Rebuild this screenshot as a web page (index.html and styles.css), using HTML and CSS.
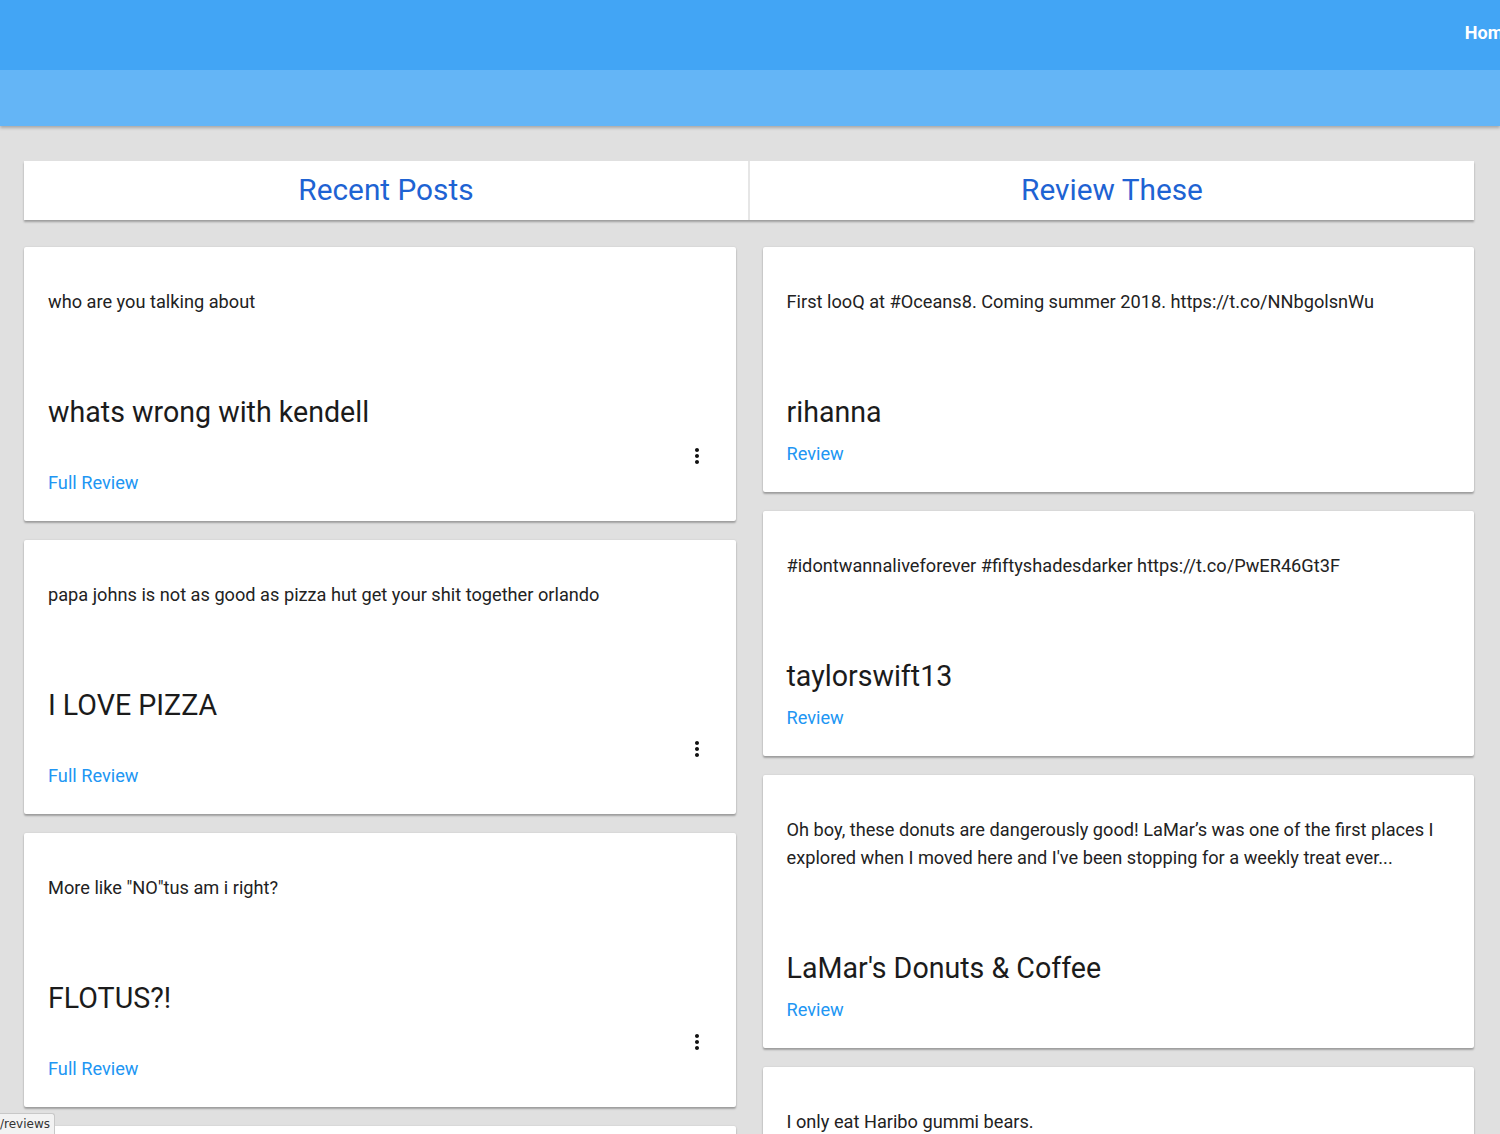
FILE: index.html
```html
<!DOCTYPE html>
<html>
<head>
<meta charset="utf-8">
<link rel="stylesheet" href="styles.css">
</head>
<body>
<header class="appbar">
  <div class="appbar-top">
    <nav class="nav"><a class="nav-link">Home</a></nav>
  </div>
  <div class="appbar-bottom"></div>
</header>
<main class="main">
  <div class="tabs">
    <div class="tab">Recent Posts</div>
    <div class="tab">Review These</div>
  </div>
  <div class="columns">
    <div class="column">
      <div class="card">
        <p class="card-text">who are you talking about</p>
        <h2 class="card-title">whats wrong with kendell</h2>
        <div class="card-more"><svg width="24" height="24" viewBox="0 0 24 24"><path d="M12 8c1.1 0 2-.9 2-2s-.9-2-2-2-2 .9-2 2 .9 2 2 2zm0 2c-1.1 0-2 .9-2 2s.9 2 2 2 2-.9 2-2-.9-2-2-2zm0 6c-1.1 0-2 .9-2 2s.9 2 2 2 2-.9 2-2-.9-2-2-2z" fill="#111"/></svg></div>
        <a class="card-link">Full Review</a>
      </div>
      <div class="card">
        <p class="card-text">papa johns is not as good as pizza hut get your shit together orlando</p>
        <h2 class="card-title">I LOVE PIZZA</h2>
        <div class="card-more"><svg width="24" height="24" viewBox="0 0 24 24"><path d="M12 8c1.1 0 2-.9 2-2s-.9-2-2-2-2 .9-2 2 .9 2 2 2zm0 2c-1.1 0-2 .9-2 2s.9 2 2 2 2-.9 2-2-.9-2-2-2zm0 6c-1.1 0-2 .9-2 2s.9 2 2 2 2-.9 2-2-.9-2-2-2z" fill="#111"/></svg></div>
        <a class="card-link">Full Review</a>
      </div>
      <div class="card">
        <p class="card-text">More like "NO"tus am i right?</p>
        <h2 class="card-title">FLOTUS?!</h2>
        <div class="card-more"><svg width="24" height="24" viewBox="0 0 24 24"><path d="M12 8c1.1 0 2-.9 2-2s-.9-2-2-2-2 .9-2 2 .9 2 2 2zm0 2c-1.1 0-2 .9-2 2s.9 2 2 2 2-.9 2-2-.9-2-2-2zm0 6c-1.1 0-2 .9-2 2s.9 2 2 2 2-.9 2-2-.9-2-2-2z" fill="#111"/></svg></div>
        <a class="card-link">Full Review</a>
      </div>
      <div class="card">
        <p class="card-text">&nbsp;</p>
      </div>
    </div>
    <div class="column">
      <div class="card">
        <p class="card-text">First looQ at #Oceans8. Coming summer 2018. https://t.co/NNbgolsnWu</p>
        <h2 class="card-title">rihanna</h2>
        <a class="card-link">Review</a>
      </div>
      <div class="card">
        <p class="card-text">#idontwannaliveforever #fiftyshadesdarker https://t.co/PwER46Gt3F</p>
        <h2 class="card-title">taylorswift13</h2>
        <a class="card-link">Review</a>
      </div>
      <div class="card">
        <p class="card-text">Oh boy, these donuts are dangerously good! LaMar’s was one of the first places I explored when I moved here and I've been stopping for a weekly treat ever...</p>
        <h2 class="card-title">LaMar's Donuts &amp; Coffee</h2>
        <a class="card-link">Review</a>
      </div>
      <div class="card">
        <p class="card-text">I only eat Haribo gummi bears.</p>
      </div>
    </div>
  </div>
</main>
<div class="status">/reviews</div>
</body>
</html>
```

FILE: styles.css
```css
html, body {
  margin: 0;
  padding: 0;
}
body {
  background: #e0e0e0;
  font-family: Roboto, "Liberation Sans", sans-serif;
  color: #212121;
  overflow: hidden;
  height: 1134px;
}
.appbar {
  box-shadow: 0 2px 3px rgba(0,0,0,0.25);
  overflow: hidden;
}
.appbar-top {
  height: 70px;
  background: #42a5f5;
  display: flex;
  justify-content: flex-end;
  align-items: center;
}
.nav {
  margin-right: -13px;
  flex-shrink: 0;
}
.nav-link {
  color: #fff;
  font-weight: 700;
  font-size: 18px;
  padding-bottom: 6px;
  display: block;
}
.appbar-bottom {
  height: 56px;
  background: #64b5f6;
}
.main {
  padding: 35px 26px 0 24px;
}
.tabs {
  display: flex;
  gap: 2px;
  height: 59px;
  background: #e6e6e6;
  box-shadow: 0 2px 2px rgba(0,0,0,0.3);
}
.tab {
  flex: 1;
  background: #fff;
  display: flex;
  align-items: center;
  justify-content: center;
  font-size: 29.8px;
  color: #1e63d3;
  padding-bottom: 2px;
}
.columns {
  display: flex;
  gap: 27px;
  margin-top: 27px;
}
.column {
  flex: 1;
  display: flex;
  flex-direction: column;
  gap: 19px;
}
.card {
  background: #fff;
  border-radius: 2px;
  box-shadow: 0 2px 2px rgba(0,0,0,0.28), 0 0 2px rgba(0,0,0,0.12);
  padding: 41px 24px 24px 24px;
  display: flex;
  flex-direction: column;
}
.card-text {
  margin: 0;
  font-size: 18.2px;
  line-height: 28px;
  color: #222;
}
.card-title {
  margin: 76px 0 0 0;
  font-size: 28.6px;
  font-weight: 400;
  line-height: 40px;
  color: #1b1b1b;
}
.card-link {
  margin-top: 8px;
  font-size: 18.2px;
  line-height: 28px;
  color: #2196f3;
}
.card-more {
  display: flex;
  justify-content: flex-end;
  height: 24px;
  margin-top: 12px;
  margin-right: 3px;
  margin-bottom: -7px;
}
.status {
  position: fixed;
  left: -5px;
  bottom: 0;
  height: 20px;
  padding: 0 4px 0 4px;
  background: #f2f2f2;
  border: 1px solid #c8c8c8;
  border-bottom: none;
  border-radius: 0 3px 0 0;
  font-family: "DejaVu Sans", sans-serif;
  font-size: 12px;
  line-height: 21px;
  color: #333;
}
```
